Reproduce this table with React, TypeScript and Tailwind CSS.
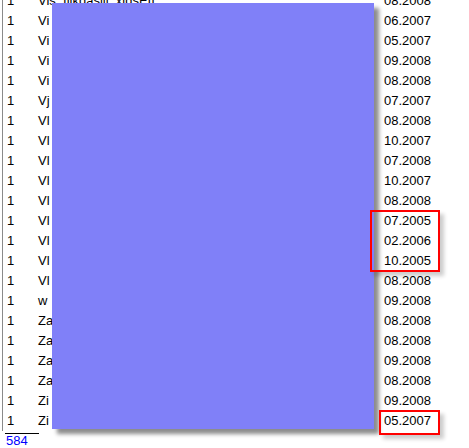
import React from 'react';

const rows: [string, string][] = [
  ['Vis_Illkdasill_xlqsEII', '08.2008'],
  ['Vi', '06.2007'],
  ['Vi', '05.2007'],
  ['Vi', '09.2008'],
  ['Vi', '08.2008'],
  ['Vj', '07.2007'],
  ['Vl', '08.2008'],
  ['Vl', '10.2007'],
  ['Vl', '07.2008'],
  ['Vl', '10.2007'],
  ['Vl', '08.2008'],
  ['Vl', '07.2005'],
  ['Vl', '02.2006'],
  ['Vl', '10.2005'],
  ['Vl', '08.2008'],
  ['w', '09.2008'],
  ['Za', '08.2008'],
  ['Za', '08.2008'],
  ['Za', '09.2008'],
  ['Za', '08.2008'],
  ['Zi', '09.2008'],
  ['Zi', '05.2007'],
];

export default function App() {
  return (
    <div
      className="relative w-[469px] h-[448px] overflow-hidden bg-white text-[13px] text-black"
      style={{ fontFamily: '"Liberation Sans", Arial, sans-serif' }}
    >
      <div className="ml-[2px] mt-[-9px] border-l border-[#8a8a8a] w-[460px]">
        {rows.map(([name, date], i) => (
          <div key={i} className="flex h-[20px] items-center leading-[20px]">
            <span className="w-[35px] pl-[4px]">1</span>
            <span className="flex-1 whitespace-nowrap">{name}</span>
            <span className="w-[78px]">{date}</span>
          </div>
        ))}
      </div>
      <div className="ml-[5px] mt-[2px] w-[34px] border-t border-black" />
      <div className="ml-[6px] leading-[14px] text-[#0000ff]">584</div>

      {/* overlay */}
      <div className="absolute left-[52px] top-[3px] w-[322px] h-[426px] bg-[#8080f8] shadow-[5px_5px_4px_rgba(0,0,0,0.45)]" />
      <div className="absolute left-[370px] top-[210px] w-[70px] h-[62px] border-2 border-[#ff0000] shadow-[4px_4px_4px_rgba(0,0,0,0.2)]" />
      <div className="absolute left-[379px] top-[410px] w-[61px] h-[25px] border-2 border-[#ff0000] shadow-[4px_4px_4px_rgba(0,0,0,0.2)]" />
    </div>
  );
}
